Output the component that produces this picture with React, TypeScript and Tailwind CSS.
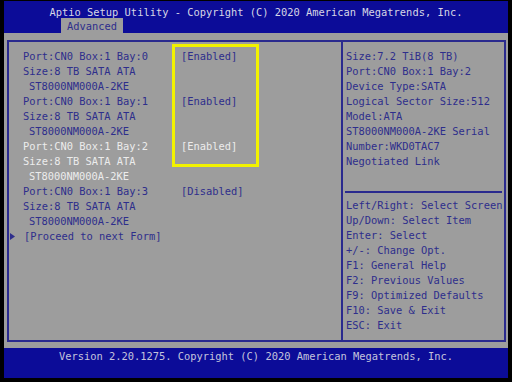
import React from "react";

const BLUE_TXT = "text-[#2e2e8c]";
const WHITE_TXT = "text-[#ececec]";

type Row = { label: string; value?: string; white?: boolean; indent?: boolean };

const rows: Row[] = [
  { label: "Port:CN0 Box:1 Bay:0", value: "[Enabled]" },
  { label: "Size:8 TB SATA ATA" },
  { label: "ST8000NM000A-2KE", indent: true },
  { label: "Port:CN0 Box:1 Bay:1", value: "[Enabled]" },
  { label: "Size:8 TB SATA ATA" },
  { label: "ST8000NM000A-2KE", indent: true },
  { label: "Port:CN0 Box:1 Bay:2", value: "[Enabled]", white: true },
  { label: "Size:8 TB SATA ATA", white: true },
  { label: "ST8000NM000A-2KE", indent: true, white: true },
  { label: "Port:CN0 Box:1 Bay:3", value: "[Disabled]" },
  { label: "Size:8 TB SATA ATA" },
  { label: "ST8000NM000A-2KE", indent: true },
];

const info = [
  "Size:7.2 TiB(8 TB)",
  "Port:CN0 Box:1 Bay:2",
  "Device Type:SATA",
  "Logical Sector Size:512",
  "Model:ATA",
  "ST8000NM000A-2KE Serial",
  "Number:WKD0TAC7",
  "Negotiated Link",
];

const help = [
  "Left/Right: Select Screen",
  "Up/Down: Select Item",
  "Enter: Select",
  "+/-: Change Opt.",
  "F1: General Help",
  "F2: Previous Values",
  "F9: Optimized Defaults",
  "F10: Save & Exit",
  "ESC: Exit",
];

export default function App() {
  return (
    <div
      className="w-[512px] h-[382px] bg-black pl-[4px] pr-[4px] pt-[1px] pb-[4px] flex flex-col text-[10.4px] leading-[15px] whitespace-pre"
      style={{ fontFamily: '"DejaVu Sans Mono", monospace' }}
    >
      {/* Header */}
      <div className="h-[32px] bg-[#0c0c98] flex flex-col">
        <div className="h-[17px] pt-[4px] text-center text-[#d6d6e6] leading-[15px]">
          Aptio Setup Utility - Copyright (C) 2020 American Megatrends, Inc.
        </div>
        <div className="flex pl-[57px]">
          <div className="w-[62px] h-[15px] bg-[#9d9d9d] text-[#2e2e8c] text-center leading-[16px]">
            Advanced
          </div>
        </div>
      </div>

      {/* Body */}
      <div className="flex-1 bg-[#9d9d9d] pt-[7px] pl-[3px] pr-[2px] pb-[6px] flex">
        <div className="relative flex-1 border-2 border-[#2a2a8e] flex">
          {/* Left panel */}
          <div className="w-[332px] pt-[7px] flex flex-col">
            {rows.map((r, i) => (
              <div
                key={i}
                className={`flex h-[15px] ${r.white ? WHITE_TXT : BLUE_TXT}`}
              >
                <div className={`w-[172px] ${r.indent ? "pl-[20px]" : "pl-[14px]"}`}>{r.label}</div>
                {r.value && <div>{r.value}</div>}
              </div>
            ))}
            <div className={`flex h-[15px] items-center ${BLUE_TXT}`}>
              <svg width="14" height="15" viewBox="0 0 14 15" className="shrink-0">
                <polygon points="1,4 6,7.5 1,11" fill="#2e2e8c" />
              </svg>
              <span className="pl-[1px]">[Proceed to next Form]</span>
            </div>
            {/* Yellow highlight */}
            <div className="absolute left-[163px] top-[2px] w-[87px] h-[123px] border-[3px] border-[#f2f200]" />
          </div>
          {/* Divider */}
          <div className="w-[2px] bg-[#2a2a8e]" />
          {/* Right panel */}
          <div className="flex-1 flex flex-col">
            <div className={`h-[149px] pt-[7px] pl-[3px] ${BLUE_TXT}`}>
              {info.map((t, i) => (
                <div key={i} className="h-[15px]">
                  {t}
                </div>
              ))}
            </div>
            <div className="h-[2px] bg-[#2a2a8e] mx-[2px]" />
            <div className={`pt-[5px] pl-[3px] ${BLUE_TXT}`}>
              {help.map((t, i) => (
                <div key={i} className="h-[15px]">
                  {t}
                </div>
              ))}
            </div>
          </div>
        </div>
      </div>

      {/* Footer */}
      <div className="h-[30px] bg-[#0c0c98] pt-[1px] text-center text-[#c4c4dc]">
        Version 2.20.1275. Copyright (C) 2020 American Megatrends, Inc.
      </div>
    </div>
  );
}
